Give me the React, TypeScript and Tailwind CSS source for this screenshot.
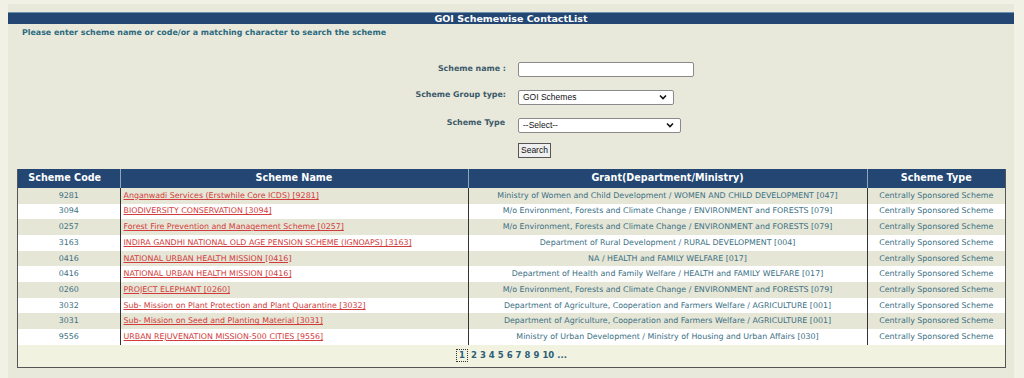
import React from "react";

interface SchemeRow {
  code: string;
  name: string;
  grant: string;
  type: string;
}

const rows: SchemeRow[] = [
  { code: "9281", name: "Anganwadi Services (Erstwhile Core ICDS) [9281]", grant: "Ministry of Women and Child Development / WOMEN AND CHILD DEVELOPMENT [047]", type: "Centrally Sponsored Scheme" },
  { code: "3094", name: "BIODIVERSITY CONSERVATION [3094]", grant: "M/o Environment, Forests and Climate Change / ENVIRONMENT and FORESTS [079]", type: "Centrally Sponsored Scheme" },
  { code: "0257", name: "Forest Fire Prevention and Management Scheme [0257]", grant: "M/o Environment, Forests and Climate Change / ENVIRONMENT and FORESTS [079]", type: "Centrally Sponsored Scheme" },
  { code: "3163", name: "INDIRA GANDHI NATIONAL OLD AGE PENSION SCHEME (IGNOAPS) [3163]", grant: "Department of Rural Development / RURAL DEVELOPMENT [004]", type: "Centrally Sponsored Scheme" },
  { code: "0416", name: "NATIONAL URBAN HEALTH MISSION [0416]", grant: "NA / HEALTH and FAMILY WELFARE [017]", type: "Centrally Sponsored Scheme" },
  { code: "0416", name: "NATIONAL URBAN HEALTH MISSION [0416]", grant: "Department of Health and Family Welfare / HEALTH and FAMILY WELFARE [017]", type: "Centrally Sponsored Scheme" },
  { code: "0260", name: "PROJECT ELEPHANT [0260]", grant: "M/o Environment, Forests and Climate Change / ENVIRONMENT and FORESTS [079]", type: "Centrally Sponsored Scheme" },
  { code: "3032", name: "Sub- Mission on Plant Protection and Plant Quarantine [3032]", grant: "Department of Agriculture, Cooperation and Farmers Welfare / AGRICULTURE [001]", type: "Centrally Sponsored Scheme" },
  { code: "3031", name: "Sub- Mission on Seed and Planting Material [3031]", grant: "Department of Agriculture, Cooperation and Farmers Welfare / AGRICULTURE [001]", type: "Centrally Sponsored Scheme" },
  { code: "9556", name: "URBAN REJUVENATION MISSION-500 CITIES [9556]", grant: "Ministry of Urban Development / Ministry of Housing and Urban Affairs [030]", type: "Centrally Sponsored Scheme" },
];

const verdana = "font-['DejaVu_Sans',Verdana,sans-serif]";

function Chevron() {
  return (
    <svg width="8" height="6" viewBox="0 0 8 6" className="shrink-0">
      <path d="M1 1.5 L4 4.5 L7 1.5" fill="none" stroke="#111" strokeWidth="1.6" />
    </svg>
  );
}

function FakeSelect({ value, width }: { value: string; width: string }) {
  return (
    <div className={`${width} h-[15px] flex items-center justify-between pl-[4px] pr-[6px] bg-white border border-[#8a8a8a] rounded-[2px]`}>
      <span className="text-[8.5px] font-normal text-[#111] font-['Liberation_Sans',Arial,sans-serif]">{value}</span>
      <Chevron />
    </div>
  );
}

export default function App() {
  return (
    <div className={`w-[1024px] h-[378px] bg-[#f1f1e6] pt-[4px] overflow-hidden ${verdana}`}>
      <div className="ml-[8px] w-[1006px] h-[374px] bg-[#e9e9db]">
        {/* title bar */}
        <div className="pt-[8px]">
          <div className="h-[12px] bg-[#234673] border-t border-[#6f8fae] flex items-center justify-center">
            <span className="text-white font-bold text-[9.5px] leading-none">GOI Schemewise ContactList</span>
          </div>
        </div>
        <div className="pl-[14px] pt-[3px] text-[7.9px] font-bold text-[#2c6a80]">
          Please enter scheme name or code/or a matching character to search the scheme
        </div>

        {/* search form */}
        <div className="mt-[23px] grid grid-cols-[498px_1fr] gap-x-[12px] text-[7.9px] font-bold text-[#3c5a6a]">
          <div className="h-[15px] flex items-center justify-end">Scheme name :</div>
          <div className="h-[15px] w-[176px] bg-white border border-[#8a8a8a] rounded-[2px]" />
          <div className="h-[28px] flex items-end justify-end pb-[4px]">Scheme Group type:</div>
          <div className="h-[28px] flex items-end">
            <FakeSelect value="GOI Schemes" width="w-[156px]" />
          </div>
          <div className="h-[28px] flex items-end justify-end pb-[4px] pr-[1px]">Scheme Type</div>
          <div className="h-[28px] flex items-end">
            <FakeSelect value="--Select--" width="w-[163px]" />
          </div>
          <div />
          <div className="h-[25px] flex items-end">
            <div className="h-[15px] px-[2px] flex items-center bg-[#efefef] border border-[#555] text-[8.5px] font-normal text-[#111] font-['Liberation_Sans',Arial,sans-serif]">
              Search
            </div>
          </div>
        </div>

        {/* results table */}
        <div className="mt-[11px] ml-[9px] w-[989px] border border-t-0 border-[#555]">
          <table className="w-full border-collapse table-fixed">
            <colgroup>
              <col className="w-[102px]" />
              <col className="w-[348px]" />
              <col className="w-[399px]" />
              <col />
            </colgroup>
            <thead>
              <tr className="h-[19px] bg-[#234673] text-white text-[9.6px] font-bold">
                <th className="border-r border-[#8fa6bd] font-bold pr-[8px]">Scheme Code</th>
                <th className="border-r border-[#8fa6bd] font-bold">Scheme Name</th>
                <th className="border-r border-[#8fa6bd] font-bold">Grant(Department/Ministry)</th>
                <th className="font-bold">Scheme Type</th>
              </tr>
            </thead>
            <tbody className="text-[7.9px] text-[#3a7084]">
              {rows.map((r, i) => (
                <tr key={i} className={`h-[15.7px] ${i % 2 === 0 ? "bg-[#e6e6d6]" : "bg-white"}`}>
                  <td className="text-center border-r border-[#333]">{r.code}</td>
                  <td className="pl-[3px] border-r border-[#333] whitespace-nowrap overflow-hidden">
                    <span className="text-[#d23b3b] underline">{r.name}</span>
                  </td>
                  <td className="text-center border-r border-[#333] whitespace-nowrap">{r.grant}</td>
                  <td className="text-center whitespace-nowrap">{r.type}</td>
                </tr>
              ))}
              <tr className="h-[22px] bg-[#f2f2e1]">
                <td colSpan={4} className="text-center">
                  <span className="inline-flex items-center gap-[3px] text-[8.5px] font-bold text-[#2c5f78]">
                    <span className="border border-dotted border-[#333] px-[2px] leading-[11px]">1</span>
                    <span>2</span>
                    <span>3</span>
                    <span>4</span>
                    <span>5</span>
                    <span>6</span>
                    <span>7</span>
                    <span>8</span>
                    <span>9</span>
                    <span>10</span>
                    <span>...</span>
                  </span>
                </td>
              </tr>
            </tbody>
          </table>
        </div>
      </div>
    </div>
  );
}
